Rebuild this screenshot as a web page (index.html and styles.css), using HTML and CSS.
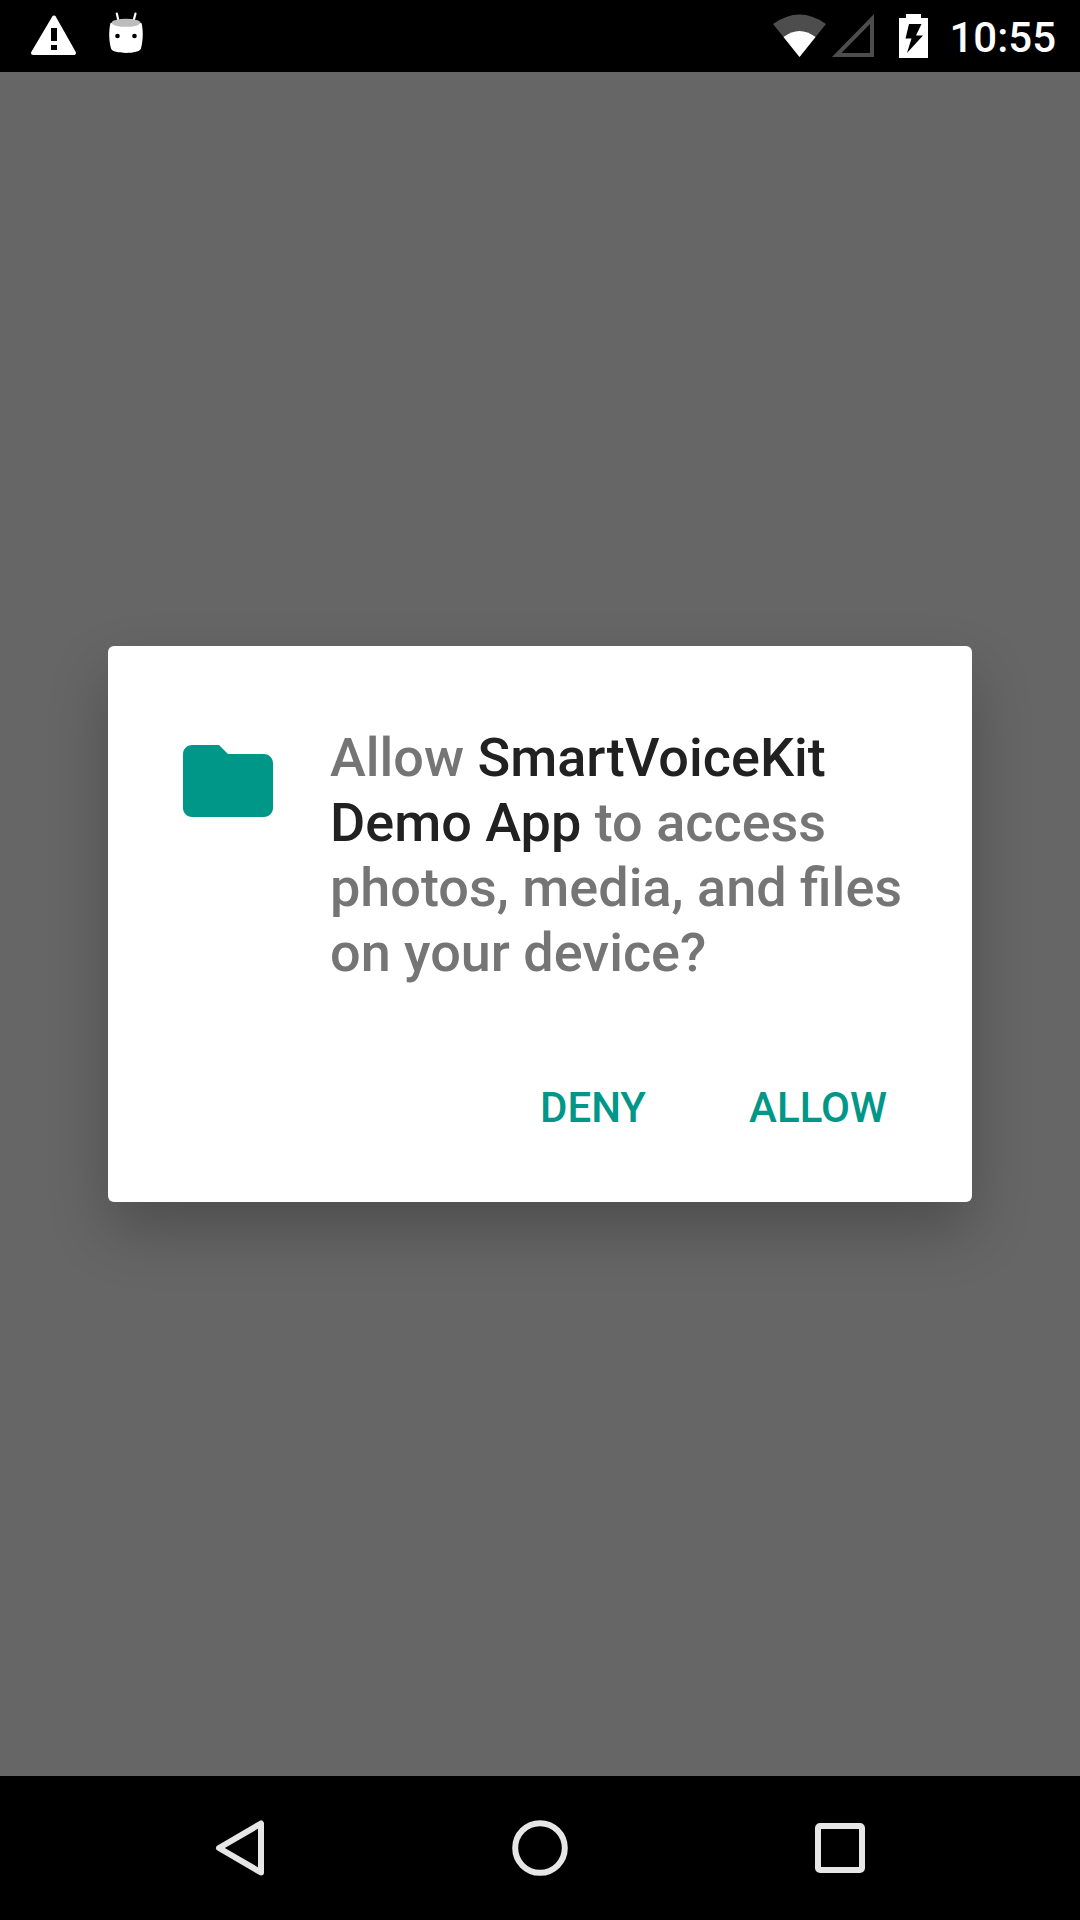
FILE: index.html
```html
<!DOCTYPE html>
<html lang="en">
<head>
<meta charset="utf-8">
<meta name="viewport" content="width=device-width, initial-scale=1">
<title>Permission request</title>
<link rel="stylesheet" href="styles.css">
</head>
<body>
<header class="status-bar">
  <div class="notifications">
    <svg class="status-icon" viewBox="0 0 72 72" aria-hidden="true">
      <path d="M36 17.500L56 53H15z" fill="#fff" stroke="#fff" stroke-width="4" stroke-linejoin="round"/>
      <path d="M33 28h6v13h-6zM33 45h6v5h-6z" fill="#000"/>
    </svg>
    <svg class="status-icon" viewBox="0 0 72 72" aria-hidden="true">
      <path d="M26.800 13.500L28.500 21M45.500 13.500L43.500 21" stroke="#fff" stroke-width="2.200" stroke-linecap="round"/>
      <path d="M20.500 23C18.500 31 19 41 21 48.500C22.500 54.400 49.500 54.400 51 48.500C53 41 53.500 31 51.500 23z" fill="#fff"/>
      <ellipse cx="36" cy="22.800" rx="14.500" ry="4" fill="#bdbdbd"/>
      <circle cx="27.500" cy="36" r="2.300" fill="#000"/>
      <circle cx="44.500" cy="36" r="2.300" fill="#000"/>
    </svg>
  </div>
  <div class="system">
    <svg class="wifi-icon" viewBox="0 0 54 44" aria-hidden="true">
      <path d="M0 10Q26.500-9 53 10L26.500 43z" fill="#4d4d4d"/>
      <path d="M10.500 23Q26.500 11 42.500 23L26.500 43z" fill="#fff"/>
    </svg>
    <svg class="signal-icon" viewBox="0 0 42 44" aria-hidden="true">
      <path d="M0 43L42 0V43zM9.500 39H38V10z" fill="#4d4d4d" fill-rule="evenodd"/>
    </svg>
    <svg class="battery-icon" viewBox="0 0 29 44" aria-hidden="true">
      <path d="M7 0H22V4H29V44H0V4H7z" fill="#fff"/>
      <path d="M10 10H22.500L17 21.500H24L8 39L12.500 24.500H6.500z" fill="#000"/>
    </svg>
    <time class="clock">10:55</time>
  </div>
</header>

<main class="screen">
  <section class="dialog" role="dialog" aria-labelledby="message">
    <div class="content">
      <svg class="folder-icon" viewBox="0 0 24 24" aria-hidden="true">
        <path d="M10 4H4c-1.100 0-2 .9-2 2v12c0 1.100.9 2 2 2h16c1.100 0 2-.9 2-2V8c0-1.100-.9-2-2-2h-8z" fill="#009688"/>
      </svg>
      <p class="message" id="message">Allow <strong class="app-name">SmartVoiceKit Demo App</strong> to access photos, media, and files on your device?</p>
    </div>
    <div class="actions">
      <button class="action" type="button">DENY</button>
      <button class="action" type="button">ALLOW</button>
    </div>
  </section>
</main>

<nav class="nav-bar" aria-label="System navigation">
  <button class="nav-button" type="button" aria-label="Back">
    <svg class="nav-icon" viewBox="0 0 60 60" aria-hidden="true">
      <path d="M51 5.500V54.500L9 30z"/>
    </svg>
  </button>
  <button class="nav-button" type="button" aria-label="Home">
    <svg class="nav-icon" viewBox="0 0 60 60" aria-hidden="true">
      <circle cx="30" cy="30" r="24.800"/>
    </svg>
  </button>
  <button class="nav-button" type="button" aria-label="Overview">
    <svg class="nav-icon" viewBox="0 0 60 60" aria-hidden="true">
      <rect x="8" y="8" width="44" height="44" rx="2"/>
    </svg>
  </button>
</nav>
</body>
</html>
```
FILE: styles.css
```css
* {
  box-sizing: border-box;
}

body {
  display: flex;
  flex-direction: column;
  min-height: 100vh;
  margin: 0;
  background: #666;
  font-family: Roboto, "Noto Sans", sans-serif;
  font-weight: 500;
}

button {
  margin: 0;
  padding: 0;
  border: 0;
  background: none;
  font: inherit;
  cursor: pointer;
}

svg {
  display: block;
  flex: none;
}

.status-bar {
  display: flex;
  justify-content: space-between;
  height: 72px;
  padding: 0 24px 0 18px;
  background: #000;
  color: #fff;
}

.notifications,
.system {
  display: flex;
  align-items: center;
}

.status-icon {
  width: 72px;
  height: 72px;
}

.wifi-icon {
  width: 54px;
  height: 44px;
  margin-right: 5px;
}

.signal-icon {
  width: 42px;
  height: 44px;
  margin-right: 25px;
}

.battery-icon {
  width: 29px;
  height: 44px;
  margin-right: 21px;
}

.clock {
  padding-top: 4px;
  font-size: 42px;
  line-height: 48px;
}

.screen {
  display: flex;
  flex: 1;
  align-items: center;
  justify-content: center;
}

.dialog {
  width: 80%;
  padding: 79px 58px 23px 66px;
  border-radius: 6px;
  background: #fff;
  box-shadow: 0 28px 60px rgba(0, 0, 0, 0.24);
}

.content {
  display: flex;
  gap: 48px;
}

.folder-icon {
  width: 108px;
  height: 108px;
  margin-top: 2px;
}

.message {
  margin: 0;
  color: #757575;
  font-size: 54px;
  line-height: 65px;
}

.app-name {
  color: #212121;
  font-weight: 500;
}

.actions {
  display: flex;
  justify-content: flex-end;
  gap: 33px;
  margin-top: 50px;
}

.action {
  min-width: 192px;
  height: 144px;
  color: #009688;
  font-size: 42px;
}

.nav-bar {
  display: flex;
  height: 144px;
  padding: 0 90px;
  background: #000;
}

.nav-button {
  display: flex;
  flex: 1;
  align-items: center;
  justify-content: center;
}

.nav-icon {
  width: 60px;
  height: 60px;
  fill: none;
  stroke: #e6e6e6;
  stroke-width: 6;
  stroke-linejoin: round;
}
```
